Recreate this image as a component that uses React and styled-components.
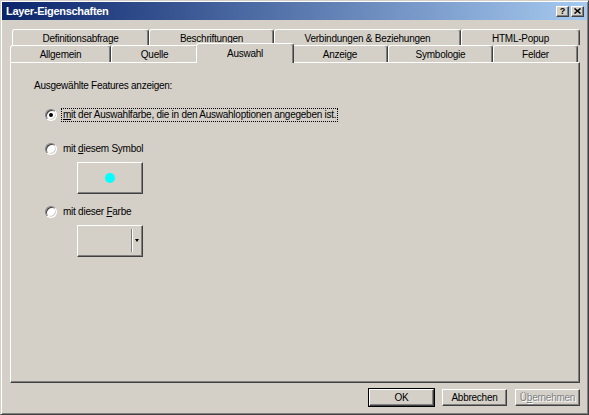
import React from 'react';
import styled, { createGlobalStyle, css } from 'styled-components';

const Global = createGlobalStyle`
  html, body { margin: 0; padding: 0; background: #d4d0c8; }
  #root { width: 589px; height: 415px; }
`;

const Window = styled.div`
  width: 589px;
  height: 415px;
  box-sizing: border-box;
  background: #d4d0c8;
  border: 1px solid;
  border-color: #d4d0c8 #404040 #404040 #d4d0c8;
  box-shadow: inset 1px 1px #fff, inset -1px -1px #808080;
  padding: 1px;
  display: flex;
  flex-direction: column;
  font-family: "Liberation Sans", Arial, sans-serif;
  font-size: 10px;
  letter-spacing: -0.25px;
  color: #000;
`;

const TitleBar = styled.div`
  height: 18px;
  flex: none;
  display: flex;
  align-items: center;
  justify-content: space-between;
  padding: 0 3px 0 4px;
  background: linear-gradient(to right, #0a246a, #a6caf0);
  color: #fff;
  font-weight: bold;
  font-size: 11px;
  letter-spacing: -0.3px;
`;

const TitleButtons = styled.div`
  display: flex;
  gap: 2px;
`;

const TitleButton = styled.div`
  width: 13px;
  height: 11px;
  box-sizing: border-box;
  background: #d4d0c8;
  border: 1px solid;
  border-color: #fff #404040 #404040 #fff;
  box-shadow: inset -1px -1px #808080;
  display: flex;
  align-items: center;
  justify-content: center;
  color: #000;
  font-size: 9px;
  font-weight: bold;
  letter-spacing: 0;
  line-height: 1;
`;

const Body = styled.div`
  flex: 1;
  display: flex;
  flex-direction: column;
  padding: 9px 7px 7px 8px;
`;

const Tabs = styled.div`
  display: flex;
  flex-direction: column;
`;

const TabRow = styled.div`
  display: flex;
  align-items: flex-end;
  height: ${p => p.$h}px;
  margin-left: ${p => p.$indent}px;
`;

const Tab = styled.div`
  box-sizing: border-box;
  width: ${p => p.$w}px;
  height: 100%;
  flex: none;
  display: flex;
  align-items: center;
  justify-content: center;
  background: #d4d0c8;
  border-top: 1px solid #fff;
  border-left: 1px solid #fff;
  border-right: 1px solid #404040;
  box-shadow: inset -1px 0 #808080;
  border-radius: 3px 3px 0 0;
  padding-top: 1px;
  white-space: nowrap;
  ${p => p.$active && css`
    width: ${p.$w + 4}px;
    height: calc(100% + 3px);
    margin: 0 -2px -1px;
    padding-bottom: 2px;
    position: relative;
    z-index: 2;
  `}
`;

const Panel = styled.div`
  flex: 1;
  box-sizing: border-box;
  border: 1px solid;
  border-color: #fff #404040 #404040 #fff;
  box-shadow: inset -1px -1px #808080;
  padding: 17px 0 0 23px;
  display: flex;
  flex-direction: column;
`;

const Heading = styled.div`
  line-height: 12px;
  height: 12px;
`;

const Options = styled.div`
  display: flex;
  flex-direction: column;
  margin-left: 11px;
`;

const RadioRow = styled.div`
  display: flex;
  align-items: center;
  height: 14px;
  gap: 4px;
  margin-top: ${p => p.$mt}px;
`;

const RadioCircle = styled.span`
  width: 12px;
  height: 12px;
  box-sizing: border-box;
  border-radius: 50%;
  background: #fff;
  border: 1px solid;
  border-color: #808080 #fff #fff #808080;
  box-shadow: inset 1px 1px #404040, inset -1px -1px #d4d0c8;
  display: flex;
  align-items: center;
  justify-content: center;
  &::after {
    content: '';
    width: 4px;
    height: 4px;
    border-radius: 50%;
    background: ${p => (p.$checked ? '#000' : 'transparent')};
  }
`;

const Label = styled.span`
  line-height: 12px;
  padding: 0 1px;
  border: 1px dotted ${p => (p.$focus ? '#000' : 'transparent')};
`;

const SymbolButton = styled.div`
  width: 66px;
  height: 32px;
  box-sizing: border-box;
  margin: 6px 0 0 32px;
  background: #d4d0c8;
  border: 1px solid;
  border-color: #fff #404040 #404040 #fff;
  box-shadow: inset -1px -1px #808080;
  display: flex;
  align-items: center;
  justify-content: center;
`;

const Dot = styled.span`
  width: 10px;
  height: 10px;
  border-radius: 50%;
  background: #00ffff;
`;

const ColorCombo = styled.div`
  width: 66px;
  height: 32px;
  box-sizing: border-box;
  margin: 6px 0 0 32px;
  background: #d4d0c8;
  border: 1px solid;
  border-color: #fff #404040 #404040 #fff;
  box-shadow: inset -1px -1px #808080;
  display: flex;
  justify-content: flex-end;
  align-items: stretch;
  padding: 3px 2px 4px 0;
`;

const ComboSep = styled.span`
  width: 1px;
  border-right: 1px solid #fff;
  background: #808080;
`;

const ComboArrow = styled.span`
  width: 7px;
  display: flex;
  align-items: center;
  justify-content: center;
  &::after {
    content: '';
    border-left: 2.5px solid transparent;
    border-right: 2.5px solid transparent;
    border-top: 3px solid #000;
  }
`;

const ButtonRow = styled.div`
  flex: none;
  display: flex;
  justify-content: flex-end;
  gap: 8px;
  margin-top: 6px;
  height: 17px;
`;

const Button = styled.div`
  width: 65px;
  box-sizing: border-box;
  background: #d4d0c8;
  border: 1px solid;
  border-color: #fff #404040 #404040 #fff;
  box-shadow: inset -1px -1px #808080;
  display: flex;
  align-items: center;
  justify-content: center;
  ${p => p.$default && css`
    outline: 1px solid #000;
  `}
  ${p => p.$disabled && css`
    color: #808080;
    text-shadow: 1px 1px #fff;
  `}
`;

const row1 = [
  ['Definitionsabfrage', 137],
  ['Beschriftungen', 125],
  ['Verbindungen & Beziehungen', 187],
  ['HTML-Popup', 119],
];

const row2 = [
  ['Allgemein', 101],
  ['Quelle', 87],
  ['Auswahl', 94, true],
  ['Anzeige', 96],
  ['Symbologie', 105],
  ['Felder', 85],
];

export default function App() {
  return (
    <>
      <Global />
      <Window>
        <TitleBar>
          <span>Layer-Eigenschaften</span>
          <TitleButtons>
            <TitleButton>?</TitleButton>
            <TitleButton>
              <svg width="7" height="6" viewBox="0 0 7 6">
                <path d="M0.5 0.5 L6.5 5.5 M6.5 0.5 L0.5 5.5" stroke="#000" strokeWidth="1.5" />
              </svg>
            </TitleButton>
          </TitleButtons>
        </TitleBar>
        <Body>
          <Tabs>
            <TabRow $h={16} $indent={2}>
              {row1.map(([t, w]) => (
                <Tab key={t} $w={w}>{t}</Tab>
              ))}
            </TabRow>
            <TabRow $h={17} $indent={0}>
              {row2.map(([t, w, a]) => (
                <Tab key={t} $w={w} $active={a}>{t}</Tab>
              ))}
            </TabRow>
          </Tabs>
          <Panel>
            <Heading>Ausgewählte Features anzeigen:</Heading>
            <Options>
              <RadioRow $mt={16}>
                <RadioCircle $checked />
                <Label $focus><u>m</u>it der Auswahlfarbe, die in den Auswahloptionen angegeben ist.</Label>
              </RadioRow>
              <RadioRow $mt={20}>
                <RadioCircle />
                <Label>mit <u>d</u>iesem Symbol</Label>
              </RadioRow>
              <SymbolButton>
                <Dot />
              </SymbolButton>
              <RadioRow $mt={11}>
                <RadioCircle />
                <Label>mit dieser <u>F</u>arbe</Label>
              </RadioRow>
              <ColorCombo>
                <ComboSep />
                <ComboArrow />
              </ColorCombo>
            </Options>
          </Panel>
          <ButtonRow>
            <Button $default>OK</Button>
            <Button>Abbrechen</Button>
            <Button $disabled>Ü<u>b</u>ernehmen</Button>
          </ButtonRow>
        </Body>
      </Window>
    </>
  );
}
